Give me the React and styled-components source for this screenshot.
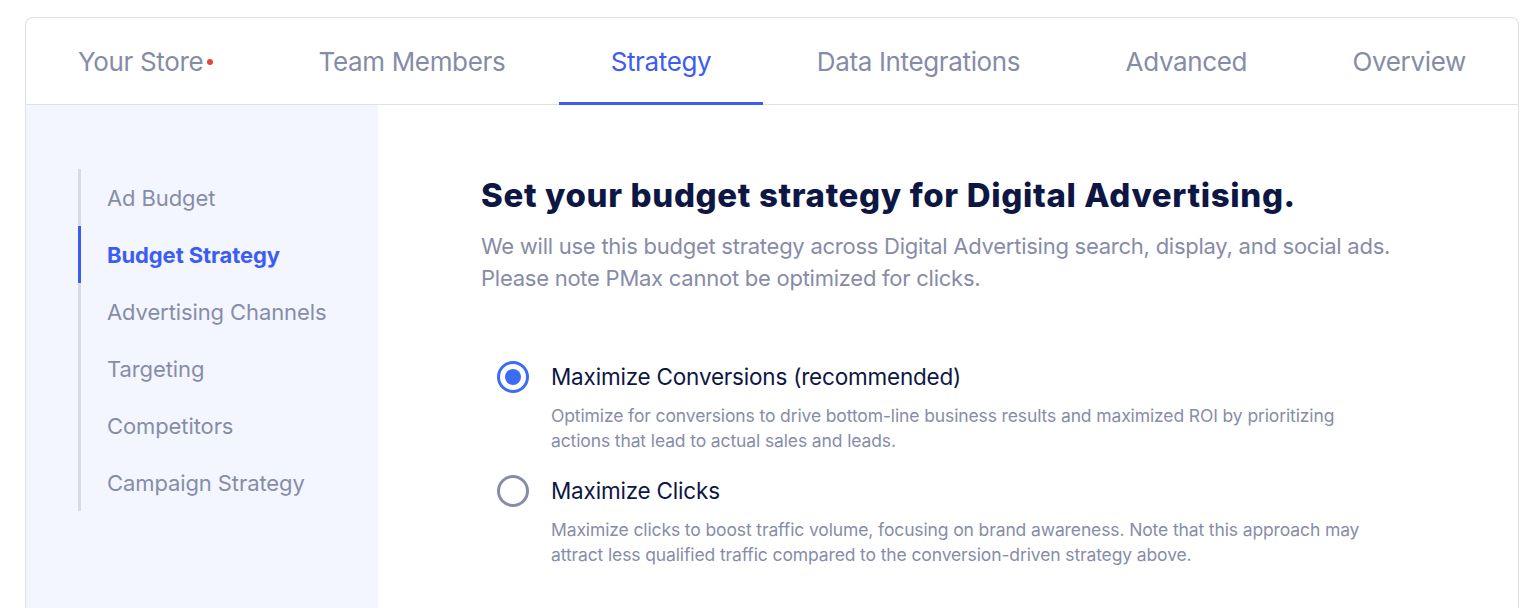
import React from "react";
import styled, { createGlobalStyle } from "styled-components";

const Global = createGlobalStyle`
  html, body { margin: 0; padding: 0; background: #ffffff; }
  body { font-family: Inter, "Noto Sans", "Liberation Sans", sans-serif; }
  * { box-sizing: border-box; }
`;

const Card = styled.div`
  margin: 17px 7px 0 25px;
  border: 1px solid #dfe1e9;
  border-bottom: none;
  border-radius: 8px 8px 0 0;
  background: #fff;
  height: 591px;
  display: flex;
  flex-direction: column;
  overflow: hidden;
`;

const TabBar = styled.nav`
  display: flex;
  justify-content: space-between;
  height: 87px;
  border-bottom: 1px solid #dfe1e9;
`;

const Tab = styled.div`
  display: flex;
  align-items: center;
  white-space: nowrap;
  padding: 3px 52px 0;
  font-size: 26px;
  letter-spacing: -0.35px;
  color: ${(p) => (p.$active ? "#3d5cf2" : "#868ca7")};
  border-bottom: 3px solid ${(p) => (p.$active ? "#3d5cf2" : "transparent")};
  margin-bottom: -1px;
`;

const Dot = styled.span`
  width: 6px;
  height: 6px;
  border-radius: 50%;
  background: #e5473c;
  margin-left: 4px;
  align-self: flex-start;
  margin-top: 38px;
`;

const Body = styled.div`
  flex: 1;
  display: flex;
`;

const Sidebar = styled.aside`
  width: 352px;
  background: #f3f6fe;
  padding: 64px 0 0 52px;
`;

const NavList = styled.ul`
  list-style: none;
  margin: 0;
  padding: 0;
  border-left: 3px solid #d8dbe3;
`;

const NavItem = styled.li`
  height: 57px;
  display: flex;
  align-items: center;
  padding-left: 26px;
  margin-left: -3px;
  border-left: 3px solid ${(p) => (p.$active ? "#3d5cf2" : "transparent")};
  font-size: 22px;
  letter-spacing: -0.1px;
  font-weight: ${(p) => (p.$active ? 700 : 400)};
  color: ${(p) => (p.$active ? "#3d5cf2" : "#878da8")};
`;

const Content = styled.main`
  flex: 1;
  padding: 70px 0 0 103px;
`;

const Title = styled.h1`
  margin: 0;
  font-size: 33px;
  line-height: 40px;
  font-weight: 800;
  letter-spacing: 0.65px;
  color: #0e1744;
`;

const Subtitle = styled.p`
  margin: 15px 0 0;
  font-size: 22px;
  line-height: 32px;
  letter-spacing: -0.25px;
  color: #868ca7;
`;

const Options = styled.div`
  margin-top: 67px;
  padding-left: 16px;
  display: flex;
  flex-direction: column;
  gap: 22px;
`;

const Option = styled.label`
  display: grid;
  grid-template-columns: 32px 1fr;
  column-gap: 22px;
  row-gap: 10px;
`;

const Radio = styled.span`
  width: 32px;
  height: 32px;
  border-radius: 50%;
  border: 3px solid ${(p) => (p.$checked ? "#3a6cf5" : "#878da8")};
  display: flex;
  align-items: center;
  justify-content: center;
  &::after {
    content: "";
    width: 16px;
    height: 16px;
    border-radius: 50%;
    background: ${(p) => (p.$checked ? "#3a6cf5" : "transparent")};
  }
`;

const OptionLabel = styled.span`
  font-size: 22.5px;
  line-height: 32px;
  letter-spacing: -0.2px;
  color: #0e1744;
`;

const OptionDesc = styled.span`
  grid-column: 2;
  font-size: 17.5px;
  line-height: 25px;
  letter-spacing: -0.12px;
  color: #878da8;
`;

const tabs = ["Your Store", "Team Members", "Strategy", "Data Integrations", "Advanced", "Overview"];
const nav = ["Ad Budget", "Budget Strategy", "Advertising Channels", "Targeting", "Competitors", "Campaign Strategy"];

export default function App() {
  return (
    <>
      <Global />
      <Card>
        <TabBar>
          {tabs.map((t) => (
            <Tab key={t} $active={t === "Strategy"}>
              {t}
              {t === "Your Store" && <Dot />}
            </Tab>
          ))}
        </TabBar>
        <Body>
          <Sidebar>
            <NavList>
              {nav.map((n) => (
                <NavItem key={n} $active={n === "Budget Strategy"}>
                  {n}
                </NavItem>
              ))}
            </NavList>
          </Sidebar>
          <Content>
            <Title>Set your budget strategy for Digital Advertising.</Title>
            <Subtitle>
              We will use this budget strategy across Digital Advertising search, display, and social ads.
              <br />
              Please note PMax cannot be optimized for clicks.
            </Subtitle>
            <Options>
              <Option>
                <Radio $checked />
                <OptionLabel>Maximize Conversions (recommended)</OptionLabel>
                <OptionDesc>
                  Optimize for conversions to drive bottom-line business results and maximized ROI by prioritizing
                  <br />
                  actions that lead to actual sales and leads.
                </OptionDesc>
              </Option>
              <Option>
                <Radio />
                <OptionLabel>Maximize Clicks</OptionLabel>
                <OptionDesc>
                  Maximize clicks to boost traffic volume, focusing on brand awareness. Note that this approach may
                  <br />
                  attract less qualified traffic compared to the conversion-driven strategy above.
                </OptionDesc>
              </Option>
            </Options>
          </Content>
        </Body>
      </Card>
    </>
  );
}
